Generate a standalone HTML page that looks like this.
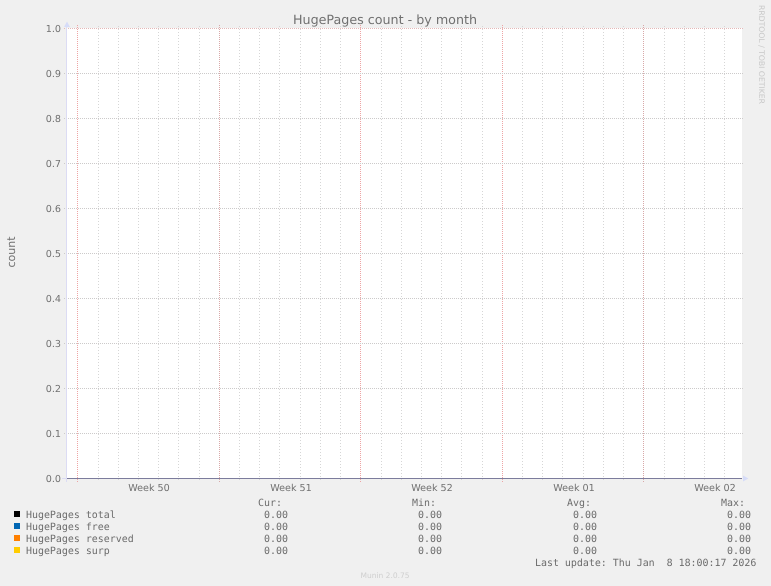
<!DOCTYPE html>
<html><head><meta charset="utf-8"><style>
html,body{margin:0;padding:0;background:#f0f0f0;width:771px;height:586px;overflow:hidden}
svg{display:block}
text{font-family:"DejaVu Sans","Liberation Sans",sans-serif;font-size:9.6px;fill:#707070;text-rendering:geometricPrecision}
.m{font-family:"DejaVu Sans Mono","Liberation Mono",monospace;font-size:9.95px;fill:#6c6c6c}
.y{text-anchor:end}
.w{text-anchor:middle}
</style></head><body>
<svg width="771" height="586" viewBox="0 0 771 586" xmlns="http://www.w3.org/2000/svg">
<rect width="771" height="586" fill="#f0f0f0"/>
<rect x="67" y="28" width="675" height="450" fill="#fff"/>
<path fill="none" stroke="#d6d6d6" stroke-dasharray="1 2" d="M98.5 26V480M118.500 26V480M138.500 26V480M158.500 26V480M178.500 26V480M199.500 26V480M239.500 26V480M259.500 26V480M279.500 26V480M300.500 26V480M320.500 26V480M340.500 26V480M381.500 26V480M401.500 26V480M421.500 26V480M441.500 26V480M461.500 26V480M482.500 26V480M522.500 26V480M542.500 26V480M562.500 26V480M583.500 26V480M603.500 26V480M623.500 26V480M664.500 26V480M684.500 26V480M704.500 26V480M724.500 26V480"/>
<path fill="none" stroke="#eea4a4" stroke-dasharray="1 1" d="M77.500 25V482M360.500 25V482M502.500 25V482"/>
<path fill="none" stroke="#d8a8a8" stroke-dasharray="1 1" d="M219.500 25V482M643.500 25V482"/>
<path fill="none" stroke="#cccaca" stroke-dasharray="1 1" d="M64 73.500H743M64 118.500H743M64 163.500H743M64 208.500H743M64 253.500H743M64 298.500H743M64 343.500H743M64 388.500H743M64 433.500H743"/>
<path fill="none" stroke="#e4b8b8" stroke-dasharray="1 1" d="M64 28.500H743"/>
<path fill="none" stroke="#dcdcf4" d="M66.500 26V482M62 478.500H742"/>
<path fill="none" stroke="#7c7c9c" d="M67 478.500H742"/>
<path fill="#d6dcf8" d="M64 27L67 21.500L70 27ZM743 475.500L748.500 478.500L743 481.500Z"/>

<text x="385" y="24" text-anchor="middle" style="font-size:12.700px">HugePages count - by month</text>
<text x="759" y="5" transform="rotate(90 759 5)" style="font-size:7.700px;fill:#c8c8c8">RRDTOOL / TOBI OETIKER</text>
<text transform="translate(15 252) rotate(-90)" text-anchor="middle" style="font-size:11px">count</text>

<text class="y" x="61" y="32">1.0</text>
<text class="y" x="61" y="77">0.9</text>
<text class="y" x="61" y="122">0.8</text>
<text class="y" x="61" y="167">0.7</text>
<text class="y" x="61" y="212">0.6</text>
<text class="y" x="61" y="257">0.5</text>
<text class="y" x="61" y="302">0.4</text>
<text class="y" x="61" y="347">0.3</text>
<text class="y" x="61" y="392">0.2</text>
<text class="y" x="61" y="437">0.1</text>
<text class="y" x="61" y="482">0.0</text>

<text class="w" x="149" y="491">Week 50</text>
<text class="w" x="291" y="491">Week 51</text>
<text class="w" x="432" y="491">Week 52</text>
<text class="w" x="574" y="491">Week 01</text>
<text class="w" x="715" y="491">Week 02</text>

<rect x="14" y="511" width="6" height="6" fill="#000"/>
<rect x="14" y="523" width="6" height="6" fill="#0066b3"/>
<rect x="14" y="535" width="6" height="6" fill="#ff8000"/>
<rect x="14" y="547" width="6" height="6" fill="#ffcc00"/>

<text class="m" x="26" y="518">HugePages total</text>
<text class="m" x="26" y="530">HugePages free</text>
<text class="m" x="26" y="542">HugePages reserved</text>
<text class="m" x="26" y="554">HugePages surp</text>

<text class="m" x="258" y="506">Cur:</text>
<text class="m" x="264" y="518">0.00</text>
<text class="m" x="264" y="530">0.00</text>
<text class="m" x="264" y="542">0.00</text>
<text class="m" x="264" y="554">0.00</text>

<text class="m" x="412" y="506">Min:</text>
<text class="m" x="418" y="518">0.00</text>
<text class="m" x="418" y="530">0.00</text>
<text class="m" x="418" y="542">0.00</text>
<text class="m" x="418" y="554">0.00</text>

<text class="m" x="567" y="506">Avg:</text>
<text class="m" x="573" y="518">0.00</text>
<text class="m" x="573" y="530">0.00</text>
<text class="m" x="573" y="542">0.00</text>
<text class="m" x="573" y="554">0.00</text>

<text class="m" x="721" y="506">Max:</text>
<text class="m" x="727" y="518">0.00</text>
<text class="m" x="727" y="530">0.00</text>
<text class="m" x="727" y="542">0.00</text>
<text class="m" x="727" y="554">0.00</text>

<text class="m" x="535" y="566" xml:space="preserve" style="white-space:pre">Last update: Thu Jan  8 18:00:17 2026</text>
<text x="385" y="578" text-anchor="middle" style="font-size:7.500px;fill:#cfcfcf">Munin 2.0.75</text>
</svg>
</body></html>
